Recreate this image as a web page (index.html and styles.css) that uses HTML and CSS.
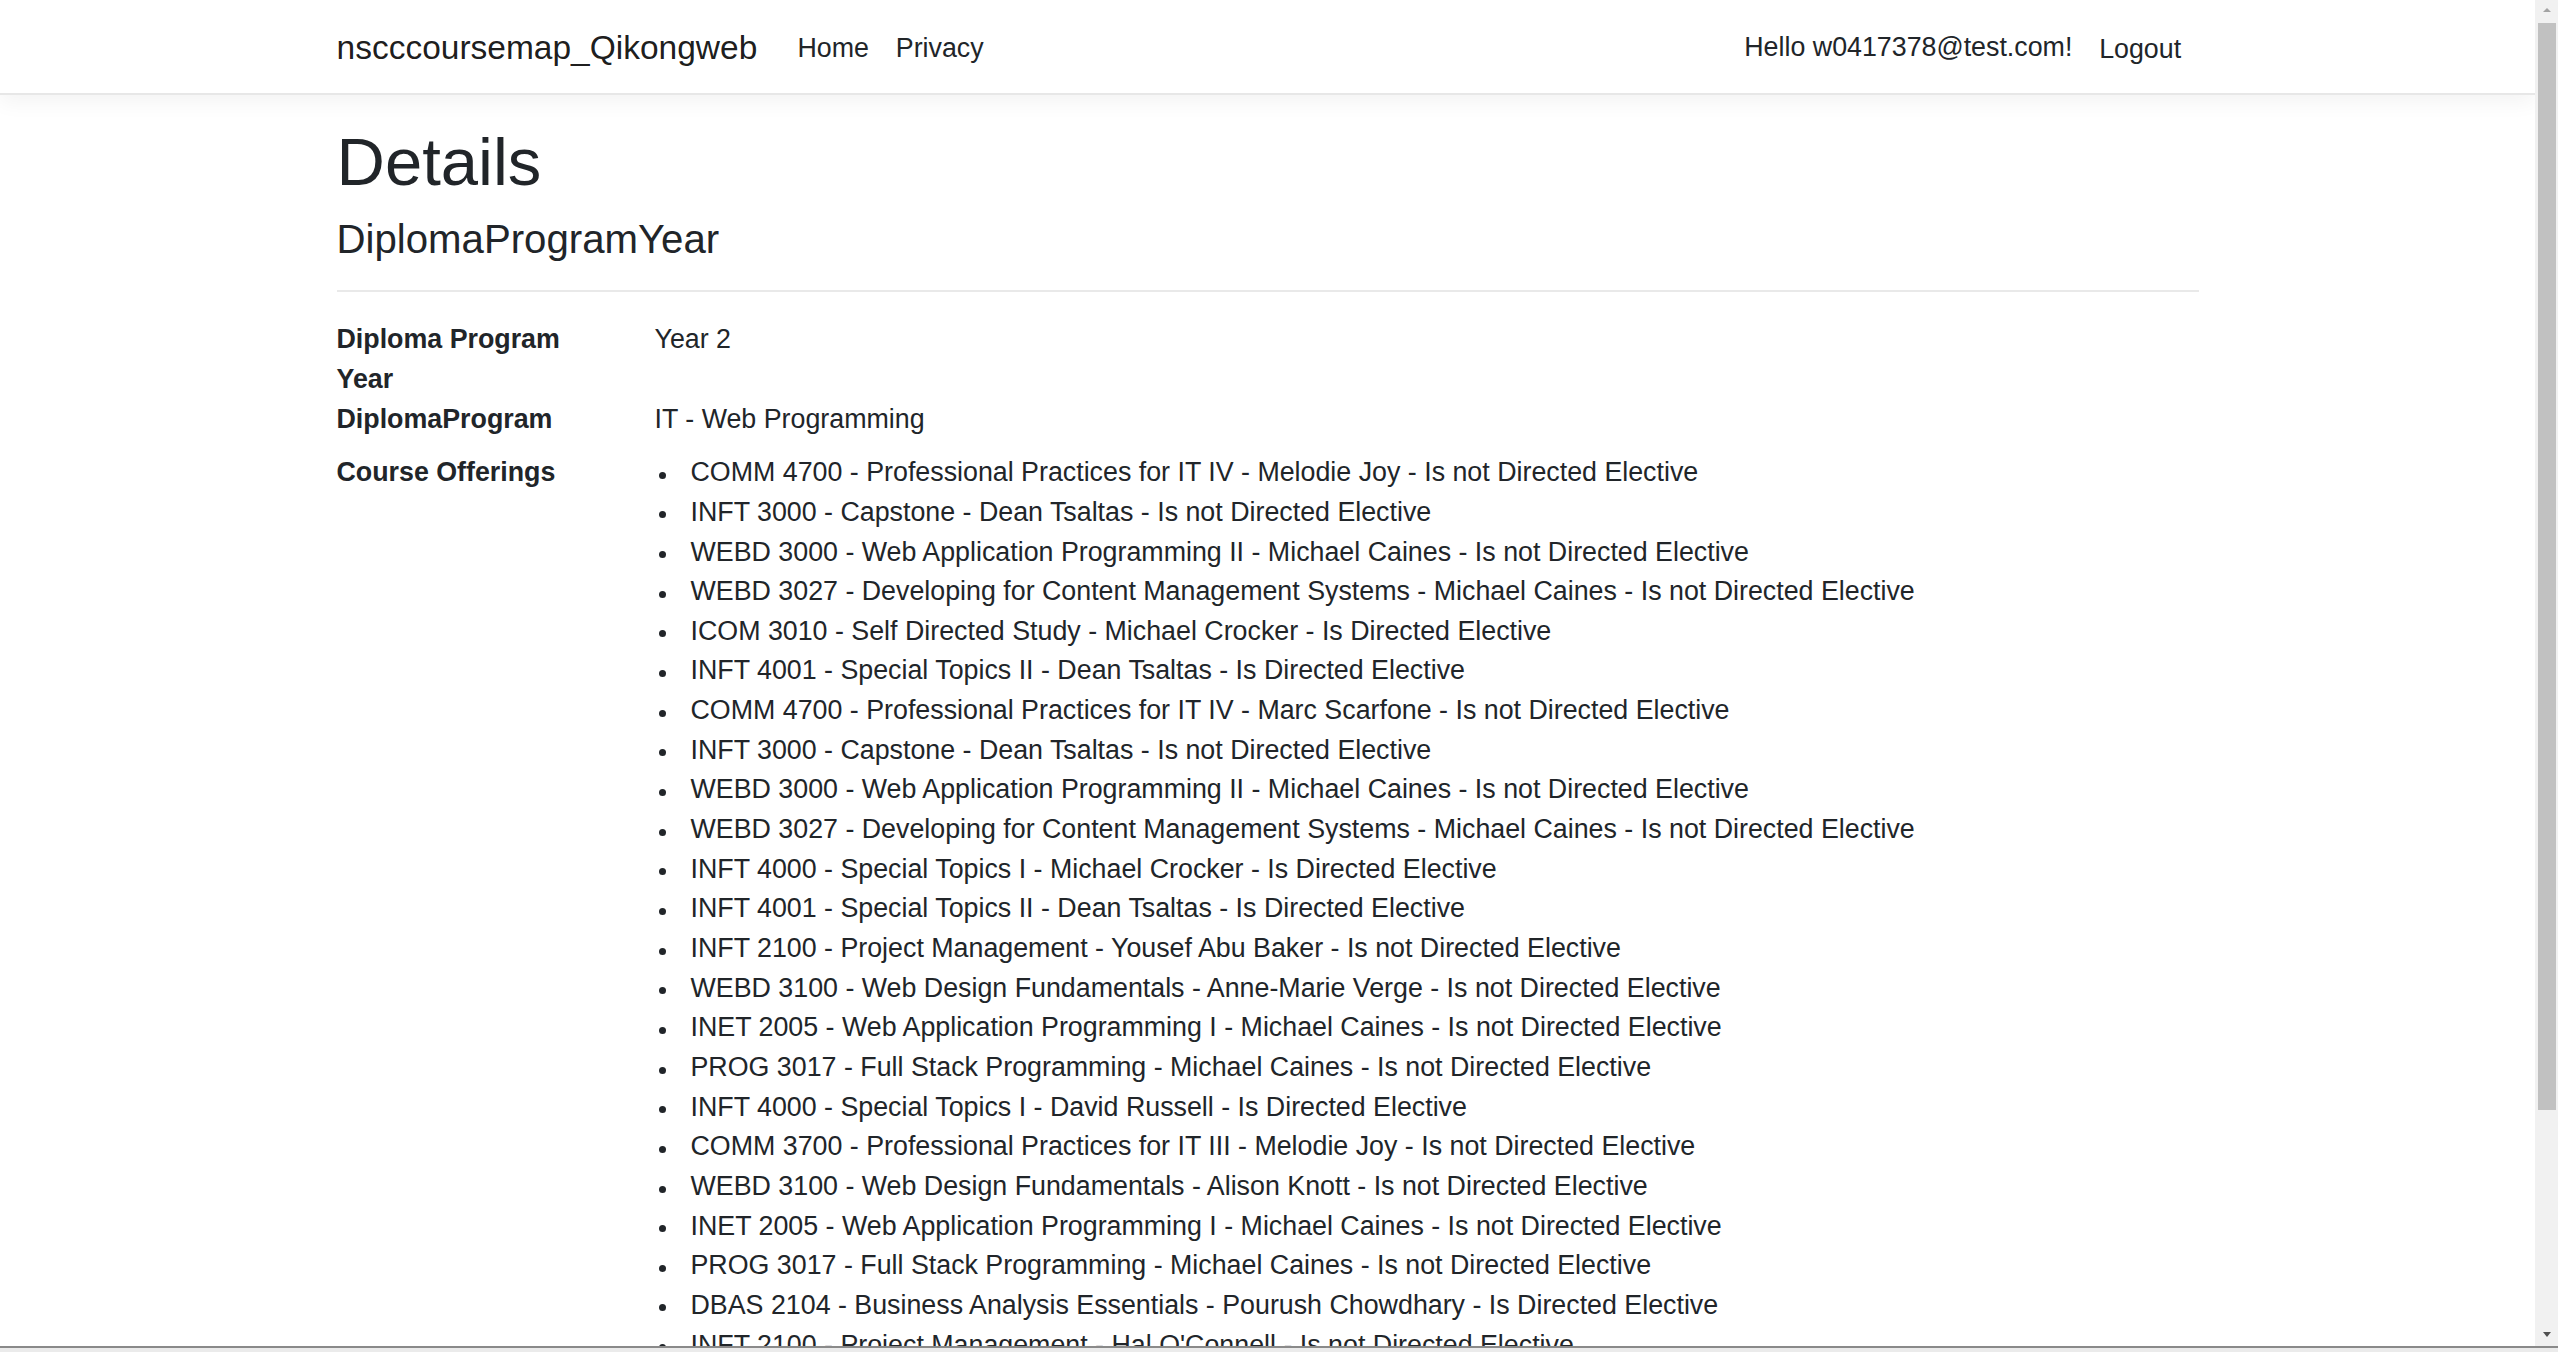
FILE: index.html
```html
<!DOCTYPE html>
<html lang="en">
<head>
<meta charset="utf-8">
<title>Details - nscccoursemap_Qikongweb</title>
<link rel="stylesheet" href="styles.css">
</head>
<body>
<header class="navbar">
  <div class="nav-container">
    <a class="brand" href="#">nscccoursemap_Qikongweb</a>
    <ul class="nav-list nav-main">
      <li><a class="nav-link" href="#">Home</a></li>
      <li><a class="nav-link" href="#">Privacy</a></li>
    </ul>
    <ul class="nav-list nav-user">
      <li><a class="nav-link" href="#">Hello w0417378@test.com!</a></li>
      <li><form class="logout-form"><button type="button" class="nav-link logout">Logout</button></form></li>
    </ul>
  </div>
</header>
<main class="container">
  <h1 class="page-title">Details</h1>
  <div class="details">
    <h4 class="entity-title">DiplomaProgramYear</h4>
    <hr class="divider">
    <dl class="detail-list">
      <dt>Diploma Program Year</dt>
      <dd>Year 2</dd>
      <dt>DiplomaProgram</dt>
      <dd>IT - Web Programming</dd>
      <dt>Course Offerings</dt>
      <dd>
        <ul class="offerings">
          <li>COMM 4700 - Professional Practices for IT IV - Melodie Joy - Is not Directed Elective</li>
          <li>INFT 3000 - Capstone - Dean Tsaltas - Is not Directed Elective</li>
          <li>WEBD 3000 - Web Application Programming II - Michael Caines - Is not Directed Elective</li>
          <li>WEBD 3027 - Developing for Content Management Systems - Michael Caines - Is not Directed Elective</li>
          <li>ICOM 3010 - Self Directed Study - Michael Crocker - Is Directed Elective</li>
          <li>INFT 4001 - Special Topics II - Dean Tsaltas - Is Directed Elective</li>
          <li>COMM 4700 - Professional Practices for IT IV - Marc Scarfone - Is not Directed Elective</li>
          <li>INFT 3000 - Capstone - Dean Tsaltas - Is not Directed Elective</li>
          <li>WEBD 3000 - Web Application Programming II - Michael Caines - Is not Directed Elective</li>
          <li>WEBD 3027 - Developing for Content Management Systems - Michael Caines - Is not Directed Elective</li>
          <li>INFT 4000 - Special Topics I - Michael Crocker - Is Directed Elective</li>
          <li>INFT 4001 - Special Topics II - Dean Tsaltas - Is Directed Elective</li>
          <li>INFT 2100 - Project Management - Yousef Abu Baker - Is not Directed Elective</li>
          <li>WEBD 3100 - Web Design Fundamentals - Anne-Marie Verge - Is not Directed Elective</li>
          <li>INET 2005 - Web Application Programming I - Michael Caines - Is not Directed Elective</li>
          <li>PROG 3017 - Full Stack Programming - Michael Caines - Is not Directed Elective</li>
          <li>INFT 4000 - Special Topics I - David Russell - Is Directed Elective</li>
          <li>COMM 3700 - Professional Practices for IT III - Melodie Joy - Is not Directed Elective</li>
          <li>WEBD 3100 - Web Design Fundamentals - Alison Knott - Is not Directed Elective</li>
          <li>INET 2005 - Web Application Programming I - Michael Caines - Is not Directed Elective</li>
          <li>PROG 3017 - Full Stack Programming - Michael Caines - Is not Directed Elective</li>
          <li>DBAS 2104 - Business Analysis Essentials - Pourush Chowdhary - Is Directed Elective</li>
          <li>INFT 2100 - Project Management - Hal O'Connell - Is not Directed Elective</li>
        </ul>
      </dd>
    </dl>
  </div>
</main>
<div class="scrollbar-v" aria-hidden="true">
  <span class="sb-arrow sb-up"></span>
  <span class="sb-thumb"></span>
  <span class="sb-arrow sb-down"></span>
</div>
<div class="scrollbar-h" aria-hidden="true"></div>
</body>
</html>
```
FILE: styles.css
```css
*,
*::before,
*::after {
  box-sizing: border-box;
}

html {
  overflow: hidden;
}

body {
  margin: 0;
  padding-right: 23px;
  font-family: "Liberation Sans", Arial, sans-serif;
  font-size: 26.8px;
  line-height: 39.66px;
  color: #212529;
  background: #ffffff;
}

/* Navbar */
.navbar {
  height: 95px;
  padding-top: 5px;
  background: #ffffff;
  border-bottom: 2px solid #e7e7e7;
  box-shadow: 0 6.7px 20px rgba(0, 0, 0, 0.05);
}

.nav-container {
  width: 1862px;
  height: 100%;
  margin: 0 auto;
  display: flex;
  align-items: center;
}

.brand {
  font-size: 33.5px;
  line-height: 50px;
  margin-right: 26.8px;
  margin-bottom: 3px;
  color: rgba(0, 0, 0, 0.9);
  text-decoration: none;
  white-space: nowrap;
}

.nav-list {
  list-style: none;
  margin: 0;
  padding: 0;
  display: flex;
}

.nav-user {
  margin-left: auto;
  margin-right: 4px;
  margin-bottom: 2px;
}

.nav-link {
  display: block;
  padding: 13.4px 13.4px;
  color: #212529;
  text-decoration: none;
  white-space: nowrap;
}

.logout-form {
  margin: 0;
}

.logout {
  font: inherit;
  line-height: inherit;
  background: none;
  border: 0;
  padding-top: 15.5px;
  padding-bottom: 11.5px;
  cursor: pointer;
}

/* Main */
.container {
  width: 1862px;
  margin: 0 auto;
  padding-top: 27px;
  padding-bottom: 236px;
}

.page-title {
  margin: 0 0 13.6px;
  font-size: 67px;
  line-height: 1.2;
  font-weight: 400;
}

.entity-title {
  margin: 0 0 13px;
  font-size: 40.2px;
  line-height: 1.2;
  font-weight: 400;
}

.divider {
  margin: 26px 0 28px;
  border: 0;
  border-top: 2px solid #e9e9e9;
}

.detail-list {
  margin: 0;
  display: grid;
  grid-template-columns: 268px 1fr;
  column-gap: 50px;
  align-items: start;
}

.detail-list dt {
  font-weight: 700;
}

.detail-list dd {
  margin: 0 0 14px;
}

.offerings {
  list-style: none;
  margin: 0;
  padding: 0;
}

.offerings li {
  display: flex;
  align-items: flex-start;
}

.offerings li::before {
  content: "";
  flex: none;
  width: 7px;
  height: 7px;
  margin: 18.5px 25px 0 4px;
  border-radius: 50%;
  background: #212529;
}

/* Window scrollbars (drawn over the page edge) */
.scrollbar-v {
  position: fixed;
  top: 0;
  right: 0;
  width: 23px;
  height: 1346px;
  background: #f1f1f1;
  display: flex;
  flex-direction: column;
  align-items: center;
}

.sb-arrow {
  flex: none;
  width: 0;
  height: 0;
  border-left: 4px solid transparent;
  border-right: 4px solid transparent;
}

.sb-up {
  margin-top: 8px;
  border-bottom: 4px solid #a3a3a3;
}

.sb-thumb {
  flex: none;
  width: 18px;
  height: 1087px;
  margin: 11px 0 0 1px;
  background: #c1c1c1;
}

.sb-down {
  margin-top: auto;
  margin-bottom: 9px;
  border-top: 5px solid #505050;
}

.scrollbar-h {
  position: fixed;
  left: 0;
  right: 0;
  bottom: 0;
  height: 6px;
  background: #ebebeb;
  border-top: 2px solid #8a8a8a;
}
```
